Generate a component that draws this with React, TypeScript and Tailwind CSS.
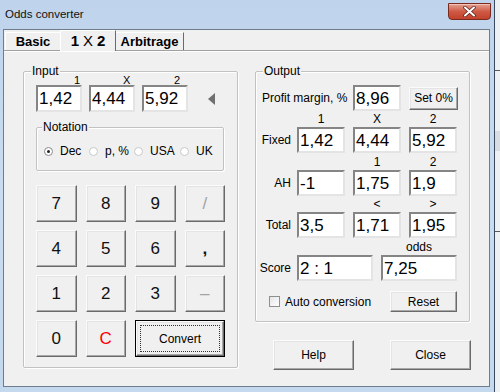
const field =
  "flex items-center bg-white border-2 border-t-[#858585] border-l-[#858585] border-r-[#e4e4e4] border-b-[#e4e4e4] px-[1px] text-[17px] leading-none text-black";
const btn =
  "flex items-center justify-center bg-[#f0f0f0] border border-t-[#fbfbfb] border-l-[#fbfbfb] border-r-[#6a6a6a] border-b-[#6a6a6a] shadow-[inset_-1px_-1px_0_#a8a8a8,inset_1px_1px_0_#e4e4e4]";
const group =
  "relative border border-[#c2c2c2] rounded-[2px] shadow-[inset_1px_1px_0_#ffffff,1px_1px_0_#ffffff]";
const legend = "absolute -top-[8px] px-[1px] bg-[#f0f0f0] text-[12px] leading-[14px] text-black";

const keys: { label: string; tone?: string }[] = [
  { label: "7" },
  { label: "8" },
  { label: "9" },
  { label: "/", tone: "text-[#a3a3a3]" },
  { label: "4" },
  { label: "5" },
  { label: "6" },
  { label: ",", tone: "font-bold" },
  { label: "1" },
  { label: "2" },
  { label: "3" },
  { label: "–", tone: "text-[#a3a3a3] text-[14px]" },
  { label: "0" },
  { label: "C", tone: "text-[#ff0000]" },
];

function Radio({ label, checked, w }: { label: string; checked?: boolean; w: string }) {
  return (
    <div className={`flex items-center gap-[7px] ${w}`}>
      <span
        className={`flex h-[9px] w-[9px] items-center justify-center rounded-full border bg-white ${
          checked ? "border-[#8a8a8a]" : "border-[#c9c9c9]"
        }`}
      >
        {checked && <span className="h-[3px] w-[3px] rounded-full bg-[#222]" />}
      </span>
      <span className="text-[12px] leading-none">{label}</span>
    </div>
  );
}

function Row({ label, values }: { label: string; values: string[] }) {
  return (
    <div className="flex h-[26px] items-center">
      <div className="w-[41px] pr-[6px] text-right text-[12px]">{label}</div>
      <div className="flex gap-[8px]">
        {values.map((v, i) => (
          <div key={i} className={`${field} h-[26px] w-[48px]`}>
            {v}
          </div>
        ))}
      </div>
    </div>
  );
}

function SubLabels({ labels, h }: { labels: string[]; h: string }) {
  return (
    <div className={`flex ${h} items-center pl-[41px] text-[12px] leading-none`}>
      <div className="flex gap-[8px]">
        {labels.map((l, i) => (
          <div key={i} className="w-[48px] text-center">
            {l}
          </div>
        ))}
      </div>
    </div>
  );
}

export default function App() {
  return (
    <div className="flex h-[392px] w-[500px] overflow-hidden bg-[#c4d8ee] font-['Liberation_Sans',Arial,sans-serif] text-black">
      <div className="flex w-[494px] flex-col bg-gradient-to-b from-[#bfd4ec] via-[#c9dcf1] to-[#c4d8ee]">
        <div className="flex h-[29px] items-start">
          <div className="pl-[5px] pt-[9px] text-[11.5px] leading-none text-[#111]">Odds converter</div>
          <div className="ml-auto mr-[3px] mt-[3px] flex h-[17px] w-[43px] items-center justify-center rounded-b-[4px] border border-[#7a2a1f] bg-gradient-to-b from-[#e4a192] via-[#cf5a45] to-[#c2412c] shadow-[inset_0_1px_0_#f2c3b8]">
            <svg width="13" height="11" viewBox="0 0 13 11">
              <path d="M2 1.5 L11 9.5 M11 1.5 L2 9.5" stroke="#5a2018" strokeWidth="3.4" strokeLinecap="round" />
              <path d="M2 1.5 L11 9.5 M11 1.5 L2 9.5" stroke="#ffffff" strokeWidth="2" strokeLinecap="round" />
            </svg>
          </div>
        </div>
        <div className="ml-[3px] flex h-[358px] w-[487px] flex-col border border-[#6e7c8e] bg-[#f0f0f0]">
          {/* tabs */}
          <div className="flex h-[20px] items-end pl-[1px]">
            <div className="flex h-[18px] w-[55px] items-center justify-center border-l border-t border-white text-[13px] font-bold">
              Basic
            </div>
            <div className="relative z-10 -mb-px flex h-[21px] w-[56px] items-center justify-center border-l border-t border-r border-l-white border-t-white border-r-[#6a6a6a] bg-[#f0f0f0] text-[15px] font-bold">
              1 <span className="mx-[4px] font-normal">X</span> 2
            </div>
            <div className="flex h-[18px] w-[68px] items-center justify-center border-t border-r border-t-white border-r-[#6a6a6a] text-[13px] font-bold">
              Arbitrage
            </div>
          </div>
          {/* page */}
          <div className="flex flex-1 border-t border-[#a0a0a0] pl-[19px] pt-[20px] shadow-[inset_0_1px_0_#ffffff]">
            {/* Input */}
            <div className={`${group} h-[297px] w-[215px]`}>
              <span className={`${legend} left-[7px]`}>Input</span>
              <div className="mt-[3px] flex h-[10px] gap-[7px] pl-[12px] text-[11px] leading-[10px]">
                <div className="w-[46px] pl-[38px]">1</div>
                <div className="w-[46px] pl-[34px]">X</div>
                <div className="w-[46px] pl-[32px]">2</div>
              </div>
              <div className="flex h-[27px] items-center gap-[7px] pl-[12px]">
                <div className={`${field} h-[27px] w-[46px]`}>1,42</div>
                <div className={`${field} h-[27px] w-[46px]`}>4,44</div>
                <div className={`${field} h-[27px] w-[46px]`}>5,92</div>
                <div className="ml-[13px] h-0 w-0 border-y-[6px] border-r-[7px] border-y-transparent border-r-[#707070]" />
              </div>
              <div className={`${group} ml-[12px] mt-[15px] h-[44px] w-[188px]`}>
                <span className={`${legend} left-[5px]`}>Notation</span>
                <div className="mt-[16px] flex h-[14px] items-center pl-[7px]">
                  <Radio label="Dec" checked w="w-[45px]" />
                  <Radio label="p, %" w="w-[45px]" />
                  <Radio label="USA" w="w-[46px]" />
                  <Radio label="UK" w="w-[40px]" />
                </div>
              </div>
              <div className="ml-[12px] mt-[14px] grid w-[189px] grid-cols-4 grid-rows-[repeat(4,37px)] gap-x-[9px] gap-y-[8px]">
                {keys.map((k) => (
                  <div key={k.label} className={`${btn} text-[17px] text-[#111] ${k.tone ?? ""}`}>
                    {k.label}
                  </div>
                ))}
                <div className="col-span-2 flex border border-black">
                  <div className={`${btn} flex-1 p-[3px]`}>
                    <div className="flex h-full w-full items-center justify-center border border-dotted border-[#333] text-[12px]">
                      Convert
                    </div>
                  </div>
                </div>
              </div>
            </div>
            {/* Output */}
            <div className="ml-[17px] flex w-[216px] flex-col">
              <div className={`${group} h-[251px] w-[215px]`}>
                <span className={`${legend} left-[7px]`}>Output</span>
                <div className="mt-[13px] flex h-[26px] items-center pl-[6px]">
                  <div className="w-[91px] text-[12px]">Profit margin, %</div>
                  <div className={`${field} h-[26px] w-[48px]`}>8,96</div>
                  <div className={`${btn} ml-[8px] h-[23px] w-[49px] text-[12px]`}>Set 0%</div>
                </div>
                <SubLabels labels={["1", "X", "2"]} h="h-[16px]" />
                <Row label="Fixed" values={["1,42", "4,44", "5,92"]} />
                <SubLabels labels={["", "1", "2"]} h="h-[17px]" />
                <Row label="AH" values={["-1", "1,75", "1,9"]} />
                <SubLabels labels={["", "<", ">"]} h="h-[16px]" />
                <Row label="Total" values={["3,5", "1,71", "1,95"]} />
                <div className="flex h-[17px] items-center pl-[125px] text-[12px] leading-none">
                  <div className="w-[76px] text-center">odds</div>
                </div>
                <div className="flex h-[26px] items-center">
                  <div className="w-[41px] pr-[6px] text-right text-[12px]">Score</div>
                  <div className={`${field} h-[26px] w-[76px]`}>2 : 1</div>
                  <div className={`${field} ml-[8px] h-[26px] w-[76px]`}>7,25</div>
                </div>
                <div className="mt-[10px] flex h-[21px] items-center pl-[13px]">
                  <span className="h-[11px] w-[11px] border border-[#8e8f8f] bg-gradient-to-br from-[#e6e6e6] to-white" />
                  <span className="ml-[5px] text-[12px]">Auto conversion</span>
                  <div className={`${btn} ml-auto mr-[12px] h-[21px] w-[67px] text-[12px]`}>Reset</div>
                </div>
              </div>
              <div className="mt-[18px] flex">
                <div className={`${btn} ml-[18px] h-[30px] w-[81px] text-[12px]`}>Help</div>
                <div className={`${btn} ml-[36px] h-[30px] w-[81px] text-[12px]`}>Close</div>
              </div>
            </div>
          </div>
        </div>
      </div>
      <div className="flex flex-1 flex-col border-l border-[#3b4a5e] bg-[#eef1f4]">
        <div className="mt-[70px] h-px bg-[#5a5a5a]" />
        <div className="mt-[60px] h-[20px] bg-[#d8dde3]" />
        <div className="mt-[80px] h-px bg-[#5a5a5a]" />
      </div>
    </div>
  );
}
